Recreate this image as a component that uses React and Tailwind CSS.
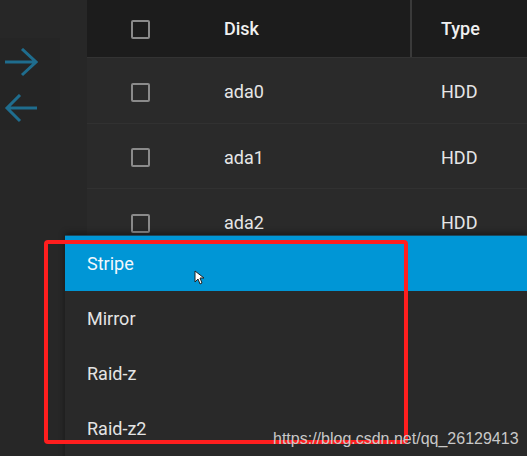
import React from 'react'

const rows = ['ada0', 'ada1', 'ada2', 'ada3']
const options = ['Stripe', 'Mirror', 'Raid-z', 'Raid-z2']

function Checkbox() {
  return <div className="w-[19px] h-[19px] rounded-[2px] border-2 border-[#8a8a8a]" />
}

function App() {
  return (
    <div className="relative w-[527px] h-[456px] overflow-hidden bg-[#292929] text-[#e6e6e6]"
      style={{ fontFamily: 'Roboto, "Liberation Sans", sans-serif' }}>
      <div className="flex h-full">
        {/* transfer buttons */}
        <div className="w-[87px] flex-shrink-0 bg-[#272727] pt-[38px]">
          <div className="w-[60px] h-[92px] bg-[#252525] flex flex-col gap-[16px] pt-[10px] pl-[4px]">
            <svg width="34" height="30" viewBox="0 0 34 30" fill="none" stroke="#1f6d8e" strokeWidth="3">
              <path d="M1 14h31M18 1l14 13-14 13" />
            </svg>
            <svg width="34" height="30" viewBox="0 0 34 30" fill="none" stroke="#1f6d8e" strokeWidth="3">
              <path d="M33 14H3M16 1L3 14l13 13" />
            </svg>
          </div>
        </div>

        {/* disk table */}
        <div className="flex-1 flex flex-col">
          <div className="h-[58px] bg-[#1c1c1c] flex items-center border-b border-[#333]">
            <div className="w-[137px] pl-[44px] pt-[1px]"><Checkbox /></div>
            <div className="w-[186px] font-medium text-[18px] text-[#f0f0f0]">Disk</div>
            <div className="h-full border-l-2 border-[#3a3a3a] pl-[29px] flex items-center font-medium text-[18px] text-[#f0f0f0]">Type</div>
          </div>
          {rows.map((r) => (
            <div key={r} className="h-[65.5px] flex items-center border-b border-[#313131] bg-[#2a2a2a] text-[18px]">
              <div className="w-[137px] pl-[44px] pt-[4px]"><Checkbox /></div>
              <div className="w-[186px] pt-[3px]">{r}</div>
              <div className="pl-[31px] pt-[3px]">HDD</div>
            </div>
          ))}
        </div>
      </div>

      {/* select dropdown */}
      <div className="absolute left-[65px] top-[235px] right-0 h-[240px] bg-[#292929] border-t-[1px] border-[#1a4a60] shadow-[0_-2px_6px_rgba(0,0,0,0.4)]">
        {options.map((o, i) => (
          <div key={o}
            className={'h-[55px] flex items-center pl-[22px] text-[18px] ' + (i === 0 ? 'bg-[#0096d6] text-[#f2f8fc]' : 'text-[#e4e4e4]')}>
            {o}
          </div>
        ))}
      </div>

      {/* mouse cursor */}
      <svg className="absolute left-[194px] top-[270px]" width="10" height="15" viewBox="0 0 10 15">
        <path d="M1 1v11l3-3 2 5 2-1-2-5h4z" fill="#fff" stroke="#222" strokeWidth="1" />
      </svg>

      {/* annotation */}
      <div className="absolute left-[44px] top-[240px] w-[364px] h-[204px] border-[4px] border-[#ff1e1e] rounded-[4px]" />

      <div className="absolute left-[273px] top-[427px] text-[16px] text-[#c8c8c8]"
        style={{ fontFamily: '"Liberation Sans", Arial, sans-serif' }}>
        https://blog.csdn.net/qq_26129413
      </div>
    </div>
  )
}

export default App
